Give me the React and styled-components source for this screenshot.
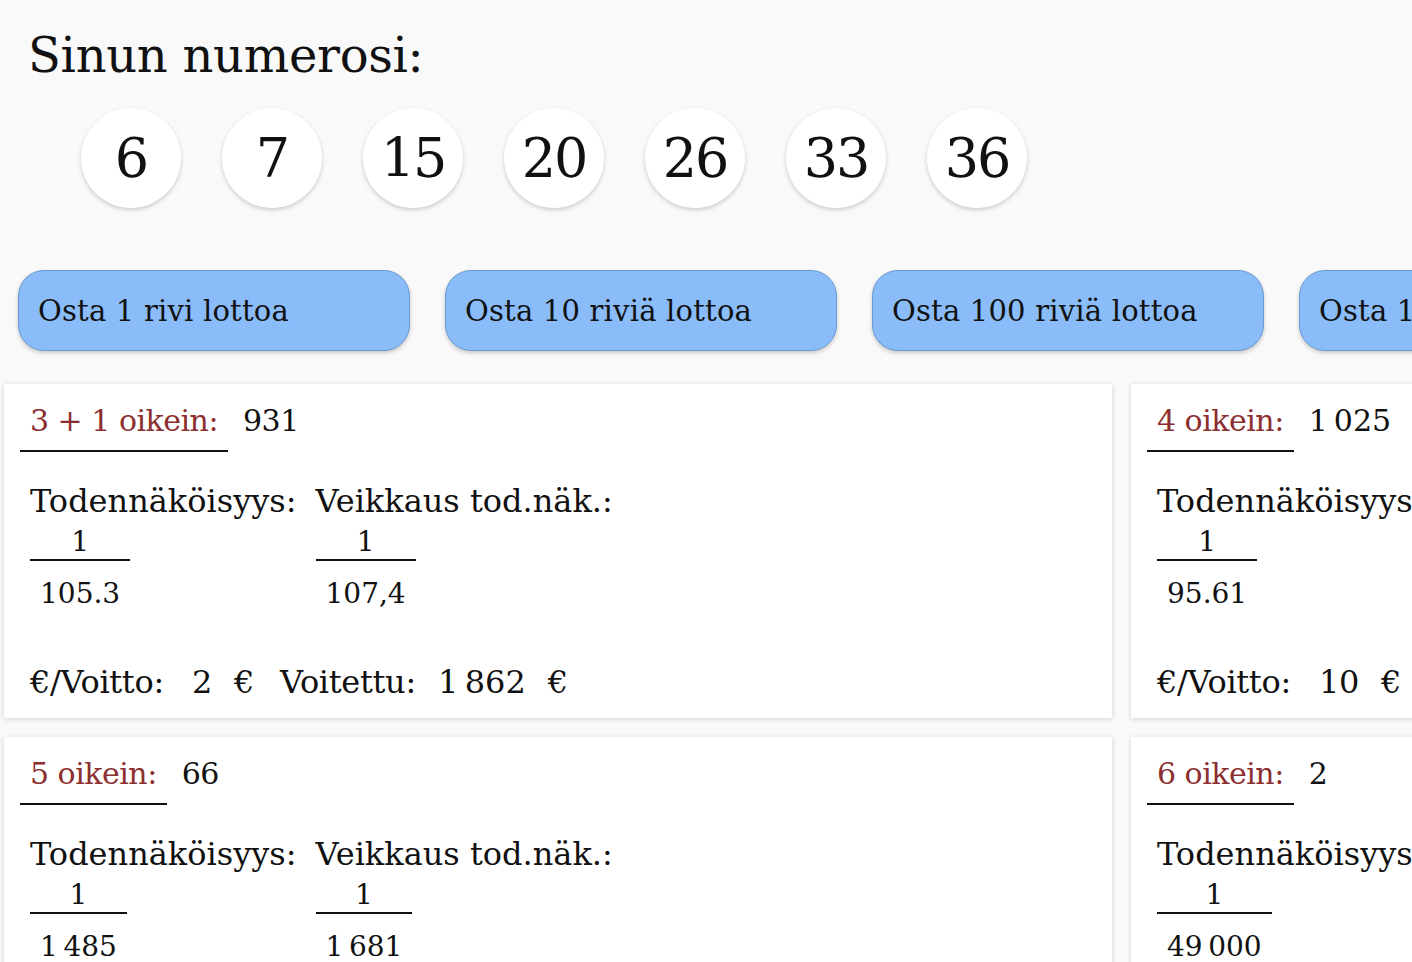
import React from 'react'
import styled, { createGlobalStyle } from 'styled-components'

const NUMBERS = [6, 7, 15, 20, 26, 33, 36]

const BUY_OPTIONS = [
  'Osta 1 rivi lottoa',
  'Osta 10 riviä lottoa',
  'Osta 100 riviä lottoa',
  'Osta 1000 riviä lottoa',
]

// narrow no-break space as thousands separator, like fi-FI formatting
const NB = '\u202f'

const RESULTS = [
  { title: '3 + 1 oikein:', count: '931', odds: '105.3', official: '107,4', prize: '2', won: `1${NB}862` },
  { title: '4 oikein:', count: `1${NB}025`, odds: '95.61', official: '95,4', prize: '10', won: `10${NB}250` },
  { title: '5 oikein:', count: '66', odds: `1${NB}485`, official: `1${NB}681`, prize: '50', won: `3${NB}300` },
  { title: '6 oikein:', count: '2', odds: `49${NB}000`, official: `47${NB}000`, prize: `2${NB}000`, won: `4${NB}000` },
]

const App = () => {
  return (
    <>
      <GlobalStyle />
      <Page>
        <Title>Sinun numerosi:</Title>

        <BallRow>
          {NUMBERS.map(n => <Ball key={n}>{n}</Ball>)}
        </BallRow>

        <ButtonRow>
          {BUY_OPTIONS.map(label => <BuyButton key={label}>{label}</BuyButton>)}
        </ButtonRow>

        <CardGrid>
          {RESULTS.map(r => (
            <Card key={r.title}>
              <CardHeader>
                <HitLabel>{r.title}</HitLabel>
                <HitCount>{r.count}</HitCount>
              </CardHeader>

              <OddsRow>
                <OddsCol>
                  <OddsLabel>Todennäköisyys:</OddsLabel>
                  <Fraction>
                    <Numerator>1</Numerator>
                    <Denominator>{r.odds}</Denominator>
                  </Fraction>
                </OddsCol>
                <OddsCol>
                  <OddsLabel>Veikkaus tod.näk.:</OddsLabel>
                  <Fraction>
                    <Numerator>1</Numerator>
                    <Denominator>{r.official}</Denominator>
                  </Fraction>
                </OddsCol>
              </OddsRow>

              <PrizeRow>
                <span>€/Voitto:</span>
                <Amount>{r.prize}</Amount>
                <Euro>€</Euro>
                <span>Voitettu:</span>
                <span>{r.won}</span>
                <Euro>€</Euro>
              </PrizeRow>
            </Card>
          ))}
        </CardGrid>
      </Page>
    </>
  )
}
export default App

const GlobalStyle = createGlobalStyle`
  html, body {
    margin: 0;
    padding: 0;
    background: #f9f9f9;
    overflow: hidden;
  }
  body {
    font-family: "DejaVu Serif", "Liberation Serif", serif;
    color: #111;
  }
`

const Page = styled.div`
  width: 1412px;
  height: 962px;
  overflow: hidden;
`

const Title = styled.h1`
  margin: 26px 0 0 28px;
  font-size: 48px;
  line-height: 58px;
  font-weight: 400;
  letter-spacing: -0.3px;
`

const BallRow = styled.div`
  display: flex;
  gap: 41px;
  margin-top: 24px;
  padding-left: 81px;
`

const Ball = styled.div`
  width: 100px;
  height: 100px;
  flex-shrink: 0;
  border-radius: 50%;
  background: #fff;
  box-shadow: 0 2px 4px rgba(0, 0, 0, 0.18);
  display: flex;
  align-items: center;
  justify-content: center;
  font-size: 54px;
  letter-spacing: -2px;
`

const ButtonRow = styled.div`
  display: flex;
  gap: 35px;
  margin-top: 62px;
  padding-left: 18px;
`

const BuyButton = styled.button`
  flex-shrink: 0;
  width: 392px;
  height: 81px;
  padding: 0 0 0 19px;
  display: flex;
  align-items: center;
  background: #89bcf8;
  border: 1px solid #6b9ad0;
  border-radius: 26px;
  box-shadow: 0 2px 4px rgba(0, 0, 0, 0.2);
  font-family: inherit;
  font-size: 29px;
  letter-spacing: 0.2px;
  color: #111;
  white-space: nowrap;
  cursor: pointer;
`

const CardGrid = styled.div`
  display: grid;
  grid-template-columns: repeat(2, 1108px);
  gap: 19px;
  margin-top: 33px;
  padding-left: 4px;
`

const Card = styled.div`
  background: #fff;
  box-shadow: 0 1px 5px rgba(0, 0, 0, 0.16);
  padding: 17px 16px 16px;
`

const CardHeader = styled.div`
  display: flex;
  align-items: flex-start;
`

const HitLabel = styled.div`
  color: #8c2f2f;
  font-size: 30px;
  line-height: 40px;
  padding: 0 10px 9px;
  border-bottom: 2px solid #111;
  letter-spacing: -0.5px;
`

const HitCount = styled.div`
  font-size: 30px;
  line-height: 40px;
  margin-left: 15px;
  letter-spacing: -0.5px;
`

const OddsRow = styled.div`
  display: flex;
  gap: 19px;
  margin-top: 29px;
  padding-left: 10px;
`

const OddsCol = styled.div`
  display: flex;
  flex-direction: column;
  align-items: flex-start;
`

const OddsLabel = styled.div`
  font-size: 32px;
  line-height: 40px;
`

const Fraction = styled.div`
  display: inline-flex;
  flex-direction: column;
  align-items: center;
  margin-top: 5px;
  font-size: 28px;
`

const Numerator = styled.div`
  line-height: 32px;
`

const Denominator = styled.div`
  margin-top: 1px;
  padding: 13px 10px 0;
  border-top: 2px solid #111;
  line-height: 40px;
`

const PrizeRow = styled.div`
  display: flex;
  gap: 22px;
  margin-top: 48px;
  padding-left: 10px;
  font-size: 32px;
  line-height: 40px;
  letter-spacing: -0.3px;
`

const Amount = styled.span`
  margin-left: 6px;
`

const Euro = styled.span`
  margin-right: 4px;
`
